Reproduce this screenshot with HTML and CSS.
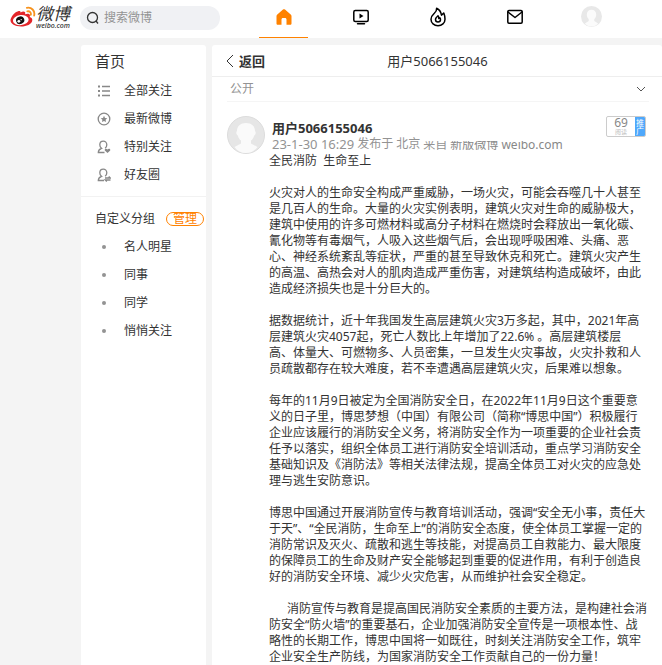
FILE: index.html
```
<!DOCTYPE html>
<html lang="zh-CN">
<head>
  <meta charset="utf-8">
  <meta name="viewport" content="width=device-width, initial-scale=1">
  <title>微博</title>
  <link rel="stylesheet" href="styles.css">
</head>
<body>
  <header class="topbar">
    <a class="logo" href="#" aria-label="微博 weibo.com">
      <svg class="logo-eye" viewBox="0 0 27 22" aria-hidden="true">
        <path d="M11 6.200c1.600-1 4-1.400 4.600-.2.4.7.2 1.500 0 2.200 2-.7 4.400-.8 5 .6.4.8 0 1.600-.3 2.200 2 .6 3.200 1.800 2.800 3.800-.6 3.600-5.700 6-11.600 6C5.500 20.800.500 18.500.500 14.500.500 11.500 4.500 5.500 8.600 4.900c1.500-.2 2.400.4 2.400 1.300z" fill="#e32529"/>
        <ellipse cx="11.200" cy="14.200" rx="8.200" ry="5.200" fill="#fff" transform="rotate(-6 11.200 14.200)"/>
        <ellipse cx="10.600" cy="14.400" rx="4.300" ry="3.900" fill="#111" transform="rotate(-20 10.600 14.400)"/>
        <circle cx="9.200" cy="15.500" r="1.500" fill="#fff"/>
        <circle cx="11.600" cy="13.800" r=".7" fill="#fff"/>
        <path d="M17.500 1.500c4.700-1 8.800 2.900 7.600 8M18 5.100c2.500-.5 4.200 1.300 3.600 3.700" fill="none" stroke="#f7931e" stroke-width="1.900" stroke-linecap="round"/>
      </svg>
      <span class="logo-words">
        <span class="logo-cn">微博</span>
        <span class="logo-en">weibo.com</span>
      </span>
    </a>
    <form class="search">
      <svg class="search-icon" viewBox="0 0 14 14" aria-hidden="true">
        <circle cx="6.500" cy="6.500" r="5" />
        <path d="M10 10l2 2.500" />
      </svg>
      <input class="search-input" type="text" placeholder="搜索微博" aria-label="搜索微博">
    </form>
    <nav class="nav">
      <a class="nav-item active" href="#" aria-label="首页">
        <svg viewBox="0 0 18 18" aria-hidden="true">
          <path d="M9 1.200c.4 0 .7.1 1 .4l5.700 5c.5.400.8.9.8 1.500v7.400c0 .8-.5 1.300-1.300 1.300h-3.700v-5.300c0-.9-.6-1.500-1.500-1.500H8c-.9 0-1.500.6-1.500 1.500v5.300H2.800c-.8 0-1.300-.5-1.300-1.300V8.100c0-.6.3-1.100.8-1.500l5.700-5c.3-.3.6-.4 1-.4z" fill="#ff8200"/>
        </svg>
      </a>
      <a class="nav-item" href="#" aria-label="视频">
        <svg viewBox="0 0 18 18" aria-hidden="true">
          <rect x="1.800" y="2.500" width="14.400" height="11" rx="1.500" class="line"/>
          <path d="M5.500 15.700h7" class="line"/>
          <path d="M7.500 5.500l4 2.500-4 2.500z"/>
        </svg>
      </a>
      <a class="nav-item" href="#" aria-label="热门">
        <svg viewBox="0 0 18 20" class="fire" aria-hidden="true">
          <path d="M7.600 1.300c.3 2.200-.9 3.600-2.300 5C3.500 8 2 9.700 2 12.200 2 16 5.100 18.700 9 18.700s7-2.700 7-6.500c0-2.400-.4-4.300-1.200-6.200l-2.300 2.100C12 5.100 10.200 2.500 7.600 1.300z" class="line"/>
          <path d="M9 8.800c-1.500 1.300-2.500 2.300-2.500 3.800a2.500 2.500 0 0 0 5 0c0-.7-.3-1.300-.7-1.800l-1 .7c.1-1-.1-1.900-.8-2.700z" class="line"/>
        </svg>
      </a>
      <a class="nav-item" href="#" aria-label="消息">
        <svg viewBox="0 0 18 18" aria-hidden="true">
          <rect x="1.800" y="2.500" width="14.400" height="12.700" rx="1.200" class="line"/>
          <path d="M2 4l7 5.500L16 4" class="line"/>
        </svg>
      </a>
      <a class="nav-item" href="#" aria-label="我的主页">
        <svg class="nav-avatar" viewBox="0 0 38 38" aria-hidden="true">
          <circle cx="19" cy="19" r="19" fill="#e8e8e8"/>
          <path d="M19 7c5 0 8.500 3.500 8.500 8.500 0 4-1.500 6.500-3.500 8.500v3l7 4.500C28 35 24 37 19 37S10 35 7 31.500l7-4.500v-3c-2-2-3.500-4.500-3.500-8.500C10.500 10.500 14 7 19 7z" fill="#fbfbfb"/>
        </svg>
      </a>
    </nav>
  </header>

  <div class="page">
    <aside class="sidebar">
      <h2 class="side-title">首页</h2>
      <ul class="side-list">
        <li><a href="#">
          <svg viewBox="0 0 14 14" aria-hidden="true"><path d="M5 2.500h8M5 7h8M5 11.500h8"/><path d="M1 2.500h2M1 7h2M1 11.500h2" stroke-width="2"/></svg>
          全部关注</a></li>
        <li><a href="#">
          <svg viewBox="0 0 14 14" aria-hidden="true"><circle cx="7" cy="7" r="5.800"/><path class="fill" d="M7 3.800l1 2.100 2.300.3-1.700 1.600.4 2.300L7 9l-2 1.100.4-2.300-1.700-1.600 2.300-.3z"/></svg>
          最新微博</a></li>
        <li><a href="#">
          <svg viewBox="0 0 14 14" aria-hidden="true"><path d="M7.500 12.500H1.300c0-2.300 1.200-3.500 3.200-4.200C3.300 7.500 2.800 6.300 2.800 4.800c0-2.200 1.500-3.700 3.500-3.700s3.500 1.500 3.500 3.700c0 1.500-.5 2.700-1.700 3.500"/><path class="fill" d="M10.500 13L7.800 10.500c-.6-1.700 1.700-2.300 2.700-.9 1-1.400 3.300-.8 2.700.9z"/></svg>
          特别关注</a></li>
        <li><a href="#">
          <svg viewBox="0 0 14 14" aria-hidden="true"><path d="M7 12.500H1.300c0-2.300 1.200-3.500 3.200-4.200C3.300 7.500 2.800 6.300 2.800 4.800c0-2.200 1.500-3.700 3.500-3.700s3.500 1.500 3.500 3.700c0 1.500-.5 2.700-1.700 3.500"/><path d="M8 10h5.300l-1.600-1.500M13.500 12H8.200l1.600 1.500"/></svg>
          好友圈</a></li>
      </ul>
      <div class="group-head">
        <span>自定义分组</span>
        <button class="manage" type="button">管理</button>
      </div>
      <ul class="side-list groups">
        <li><a href="#"><span class="dot"></span>名人明星</a></li>
        <li><a href="#"><span class="dot"></span>同事</a></li>
        <li><a href="#"><span class="dot"></span>同学</a></li>
        <li><a href="#"><span class="dot"></span>悄悄关注</a></li>
      </ul>
    </aside>

    <main class="main">
      <div class="main-head">
        <a class="back" href="#">
          <svg viewBox="0 0 8 14" aria-hidden="true"><path d="M7 1L1 7l6 6"/></svg>
          返回
        </a>
        <h1 class="main-title">用户5066155046</h1>
      </div>
      <article class="post">
        <div class="visibility">
          <span>公开</span>
          <button class="more" type="button" aria-label="更多">
            <svg viewBox="0 0 10 6" aria-hidden="true"><path d="M1 1l4 4 4-4"/></svg>
          </button>
        </div>
        <div class="post-row">
          <svg class="avatar" viewBox="0 0 38 38" aria-hidden="true">
            <circle cx="19" cy="19" r="18.500" fill="#e6e6e6" stroke="#dcdcdc"/>
            <path d="M19 7c5.500 0 9 3 9 8 1.300 1 .8 3.500-.8 4.500-.7 2.500-1.700 4-3.200 5v3l6.500 3.500C27.500 35 24 37 19 37s-8.500-2-11.500-6l6.500-3.500v-3c-1.500-1-2.500-2.500-3.200-5-1.600-1-2.100-3.500-.8-4.500 0-5 3.500-8 9-8z" fill="#fafafa"/>
          </svg>
          <div class="post-main">
            <div class="post-head">
              <div class="who">
                <a class="name" href="#">用户5066155046</a>
                <div class="meta">
                  <span class="meta-time">23-1-30 16:29</span>
                  <span>发布于 北京</span>
                  <span class="clip">来自</span>
                  <a class="clip source" href="#">新版微博 weibo.com</a>
                </div>
              </div>
              <div class="reads">
                <div class="reads-count"><b>69</b><small>阅读</small></div>
                <button class="promote" type="button">推广</button>
              </div>
            </div>
            <div class="content">
              <p>全民消防&nbsp; 生命至上</p>
              <p>火灾对人的生命安全构成严重威胁，一场火灾，可能会吞噬几十人甚至是几百人的生命。大量的火灾实例表明，建筑火灾对生命的威胁极大，建筑中使用的许多可燃材料或高分子材料在燃烧时会释放出一氧化碳、氰化物等有毒烟气，人吸入这些烟气后，会出现呼吸困难、头痛、恶心、神经系统紊乱等症状，严重的甚至导致休克和死亡。建筑火灾产生的高温、高热会对人的肌肉造成严重伤害，对建筑结构造成破坏，由此造成经济损失也是十分巨大的。</p>
              <p>据数据统计，近十年我国发生高层建筑火灾3万多起，其中，2021年高层建筑火灾4057起，死亡人数比上年增加了22.6% 。高层建筑楼层<br>高、体量大、可燃物多、人员密集，一旦发生火灾事故，火灾扑救和人员疏散都存在较大难度，若不幸遭遇高层建筑火灾，后果难以想象。</p>
              <p>每年的11月9日被定为全国消防安全日，在2022年11月9日这个重要意义的日子里，博思梦想（中国）有限公司（简称“博思中国”）积极履行企业应该履行的消防安全义务，将消防安全作为一项重要的企业社会责任予以落实，组织全体员工进行消防安全培训活动，重点学习消防安全基础知识及《消防法》等相关法律法规，提高全体员工对火灾的应急处理与逃生安防意识。</p>
              <p>博思中国通过开展消防宣传与教育培训活动，强调“安全无小事，责任大于天”、“全民消防，生命至上”的消防安全态度，使全体员工掌握一定的消防常识及灭火、疏散和逃生等技能，对提高员工自救能力、最大限度的保障员工的生命及财产安全能够起到重要的促进作用，有利于创造良好的消防安全环境、减少火灾危害，从而维护社会安全稳定。</p>
              <p class="indent">消防宣传与教育是提高国民消防安全素质的主要方法，是构建社会消防安全“防火墙”的重要基石，企业加强消防安全宣传是一项根本性、战略性的长期工作，博思中国将一如既往，时刻关注消防安全工作，筑牢企业安全生产防线，为国家消防安全工作贡献自己的一份力量！</p>
            </div>
          </div>
        </div>
      </article>
    </main>
  </div>
</body>
</html>
```
FILE: styles.css
```
* {
  box-sizing: border-box;
}
html, body {
  height: 100%;
}
body {
  margin: 0;
  display: flex;
  flex-direction: column;
  background: #f4f4f4;
  color: #333;
  font: 12px/16px "Noto Sans", "Noto Sans CJK SC", sans-serif;
  text-spacing-trim: space-all;
  overflow: hidden;
}
a {
  color: inherit;
  text-decoration: none;
}
h1, h2, p, ul {
  margin: 0;
  padding: 0;
}
ul {
  list-style: none;
}
button {
  font: inherit;
  cursor: pointer;
}

/* top bar */
.topbar {
  display: flex;
  flex: none;
  height: 38px;
  padding: 0 32px 0 10px;
  background: #fff;
}
.logo {
  display: flex;
  width: 70px;
  padding-top: 6px;
}
.logo-eye {
  width: 26px;
  height: 22px;
}
.logo-words {
  display: flex;
  flex-direction: column;
  font-style: italic;
  white-space: nowrap;
}
.logo-cn {
  font-size: 17px;
  line-height: 16px;
}
.logo-en {
  font-size: 7px;
  line-height: 7px;
  font-weight: 500;
}
.search {
  display: flex;
  align-items: center;
  gap: 4px;
  width: 140px;
  height: 24px;
  margin: 6px 25px 0 0;
  padding: 0 6px;
  border-radius: 12px;
  background: #f0f1f4;
}
.search-icon {
  flex: none;
  width: 14px;
  height: 14px;
  fill: none;
  stroke: #333;
  stroke-width: 1.3;
}
.search-input {
  flex: 1;
  min-width: 0;
  padding: 0;
  border: 0;
  outline: 0;
  background: none;
  font: inherit;
}
.search-input::placeholder {
  color: #939393;
}
.nav {
  display: flex;
  flex: 1;
}
.nav-item {
  position: relative;
  display: flex;
  flex: 1;
  align-items: center;
  justify-content: center;
  padding-bottom: 5px;
}
.nav-item svg {
  width: 18px;
  height: 18px;
}
.nav-item .fire {
  height: 20px;
}
.nav-item .nav-avatar {
  width: 21px;
  height: 21px;
}
.nav-item .line {
  fill: none;
  stroke: #000;
  stroke-width: 1.5;
  stroke-linecap: round;
  stroke-linejoin: round;
}
.nav-item.active::after {
  content: "";
  position: absolute;
  left: 14px;
  right: 14px;
  bottom: 0;
  height: 1px;
  background: #ff8200;
}

/* columns */
.page {
  display: grid;
  flex: 1;
  grid-template-columns: 125px 1fr;
  gap: 6px;
  min-height: 0;
  padding: 7px 0 0 81px;
}
.sidebar, .main {
  min-width: 0;
  border-radius: 3px 3px 0 0;
  background: #fff;
}

/* sidebar */
.side-title {
  padding: 6px 14px 5px;
  font-size: 15px;
  line-height: 21px;
  font-weight: normal;
}
.side-list a {
  display: flex;
  align-items: center;
  gap: 13px;
  height: 28px;
  padding-left: 16px;
}
.side-list svg {
  width: 14px;
  height: 14px;
  fill: none;
  stroke: #888;
  stroke-width: 1.3;
}
.side-list .fill {
  fill: #888;
  stroke: none;
}
.group-head {
  display: flex;
  align-items: center;
  justify-content: space-between;
  margin-top: 7px;
  padding: 14px 2px 6px 14px;
  border-top: 1px solid #f2f2f2;
}
.manage {
  padding: 0 6px;
  height: 14px;
  border: 1px solid #ff8200;
  border-radius: 7px;
  background: none;
  color: #ff8200;
  line-height: 12px;
}
.dot {
  width: 4px;
  height: 4px;
  margin: 0 5px;
  border-radius: 50%;
  background: #939393;
}

/* post */
.main-head {
  display: grid;
  grid-template-columns: 1fr auto 1fr;
  align-items: center;
  height: 32px;
  padding: 0 13px 0 14px;
  border-bottom: 1px solid #eee;
  font-size: 13px;
}
.back {
  display: flex;
  align-items: center;
  gap: 5px;
  font-weight: bold;
}
.back svg {
  width: 8px;
  height: 14px;
  fill: none;
  stroke: #333;
}
.main-title {
  font-size: 13px;
  font-weight: normal;
}
.post {
  padding: 0 13px 0 15px;
}
.visibility {
  display: flex;
  align-items: center;
  justify-content: space-between;
  height: 25px;
  padding: 0 3px;
  border-bottom: 1px solid #f5f5f5;
  color: #939393;
}
.more {
  display: flex;
  padding: 0;
  border: 0;
  background: none;
}
.more svg {
  width: 10px;
  height: 6px;
  fill: none;
  stroke: #555;
}
.post-row {
  display: flex;
  gap: 4px;
  padding-top: 14px;
}
.avatar {
  flex: none;
  width: 38px;
  height: 38px;
}
.post-main {
  flex: 1;
  min-width: 0;
}
.post-head {
  display: flex;
  justify-content: space-between;
  padding: 0 3px;
}
.who {
  padding-top: 4px;
}
.name {
  display: block;
  font-size: 13px;
  font-weight: bold;
}
.meta {
  display: flex;
  gap: 3px;
  height: 17px;
  color: #939393;
  white-space: nowrap;
}
.meta-time {
  font-size: 13px;
}
.clip {
  height: 9px;
  margin-top: 5px;
  overflow: hidden;
  line-height: 7px;
}
.source {
  color: #888;
}
.reads {
  display: flex;
  width: 40px;
  height: 21px;
  border: 1px solid #ccc;
  border-radius: 2px;
  overflow: hidden;
}
.reads-count {
  display: flex;
  flex: 1;
  flex-direction: column;
  align-items: center;
  color: #888;
}
.reads-count b {
  font-weight: normal;
  line-height: 12px;
}
.reads-count small {
  color: #bbb;
  font-size: 6px;
  line-height: 6px;
}
.promote {
  width: 10px;
  padding: 0;
  border: 0;
  background: #4fa8fb;
  color: #fff;
  font-size: 8px;
  line-height: 8px;
}
.content p {
  margin-bottom: 16px;
}
.content .indent {
  text-indent: 18px;
}
```
